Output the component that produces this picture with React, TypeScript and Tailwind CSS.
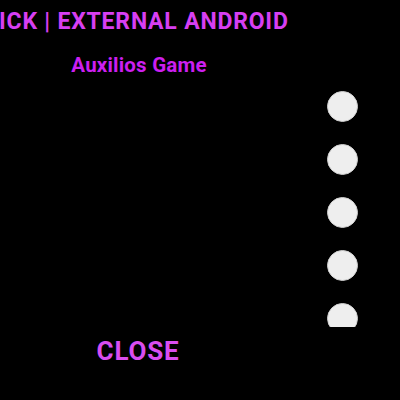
import React from "react";

export default function App() {
  const font = { fontFamily: "Roboto, 'Liberation Sans', sans-serif" };
  return (
    <div className="w-[400px] h-[400px] bg-black overflow-hidden flex flex-col" style={font}>
      <div className="flex mt-[10px] ml-[-1px]">
        <div className="whitespace-nowrap text-[23px] leading-none font-bold tracking-[0.8px] text-[#d73ff2]">
          ICK | EXTERNAL ANDROID
        </div>
      </div>
      <div className="w-[278px] flex justify-center mt-[22px]">
        <div className="whitespace-nowrap text-[20.5px] leading-none font-bold tracking-[0.2px] text-[#cc1ff0]">
          Auxilios Game
        </div>
      </div>
      <div className="mt-[15px] h-[236px] overflow-hidden flex flex-col items-end pr-[42px] gap-[22px] shrink-0">
        {[0, 1, 2, 3, 4, 5].map((i) => (
          <div key={i} className="w-[31px] h-[31px] shrink-0 rounded-full bg-[#eeeeee] border border-[#cfcfcf]" />
        ))}
      </div>
      <div className="w-[276px] flex justify-center mt-[11px]">
        <div className="whitespace-nowrap text-[26px] leading-none font-bold tracking-[0.8px] text-[#d94df0]">
          CLOSE
        </div>
      </div>
    </div>
  );
}
